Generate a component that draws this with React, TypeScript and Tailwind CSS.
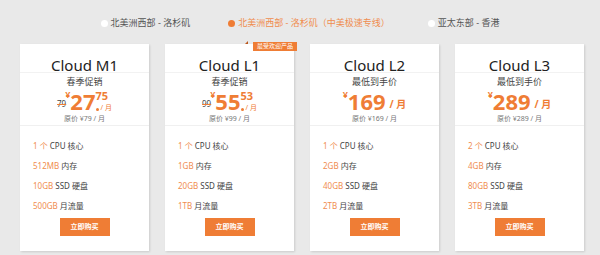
import { Fragment } from 'react';

type Plan = {
  name: string;
  tag: string;
  old?: string;
  int: string;
  dec?: string;
  orig: string;
  specs: [string, string][];
  hot?: boolean;
};

const plans: Plan[] = [
  {
    name: 'Cloud M1',
    tag: '春季促销',
    old: '79',
    int: '27',
    dec: '75',
    orig: '原价 ¥79 / 月',
    specs: [['1 个', 'CPU 核心'], ['512MB', '内存'], ['10GB', 'SSD 硬盘'], ['500GB', '月流量']],
  },
  {
    name: 'Cloud L1',
    tag: '春季促销',
    old: '99',
    int: '55',
    dec: '53',
    orig: '原价 ¥99 / 月',
    specs: [['1 个', 'CPU 核心'], ['1GB', '内存'], ['20GB', 'SSD 硬盘'], ['1TB', '月流量']],
    hot: true,
  },
  {
    name: 'Cloud L2',
    tag: '最低到手价',
    int: '169',
    orig: '原价 ¥169 / 月',
    specs: [['1 个', 'CPU 核心'], ['2GB', '内存'], ['40GB', 'SSD 硬盘'], ['2TB', '月流量']],
  },
  {
    name: 'Cloud L3',
    tag: '最低到手价',
    int: '289',
    orig: '原价 ¥289 / 月',
    specs: [['2 个', 'CPU 核心'], ['4GB', '内存'], ['80GB', 'SSD 硬盘'], ['3TB', '月流量']],
  },
];

const regions = [
  { label: '北美洲西部 - 洛杉矶', active: false },
  { label: '北美洲西部 - 洛杉矶（中美极速专线）', active: true },
  { label: '亚太东部 - 香港', active: false },
];

function Price({ p }: { p: Plan }) {
  if (!p.dec) {
    return (
      <div className="flex items-end justify-center h-[24px]">
        <span className="self-start text-[9px] font-bold text-[#ef7d35] leading-[10px] mt-[2px]">¥</span>
        <span className="text-[22px] font-bold text-[#ef7d35] leading-[22px]">{p.int}</span>
        <span className="text-[10px] font-bold text-[#ef7d35] leading-[12px] ml-[4px] mb-[2px]">/ 月</span>
      </div>
    );
  }
  return (
    <div className="flex items-end justify-center h-[24px]">
      <span className="text-[8px] text-[#444] line-through decoration-[#ef7d35] leading-[10px] mb-[3px] mr-[-1px]">{p.old}</span>
      <span className="self-start text-[9px] font-bold text-[#ef7d35] leading-[10px] mt-[2px]">¥</span>
      <span className="text-[22px] font-bold text-[#ef7d35] leading-[22px]">{p.int}</span>
      <div className="flex flex-col h-[22px] justify-between">
        <span className="text-[11px] font-bold text-[#ef7d35] leading-[11px]">{p.dec}</span>
        <div className="flex items-end leading-[8px]">
          <span className="w-[3px] h-[3px] rounded-full bg-[#ef7d35] mb-[1px]" />
          <span className="text-[7px] text-[#ef7d35] ml-[2px]">/ 月</span>
        </div>
      </div>
    </div>
  );
}

export default function App() {
  return (
    <div className="w-[600px] h-[255px] bg-[#e9e9e9] font-['Noto_Sans','Noto_Sans_CJK_SC',sans-serif] overflow-hidden">
      {/* region tabs */}
      <div className="h-[44px] flex items-center justify-center gap-[38px] pt-[2px]">
        {regions.map((r) => (
          <div key={r.label} className="flex items-center gap-[3px]">
            <span className={`w-[7px] h-[7px] rounded-full ${r.active ? 'bg-[#ef7d35]' : 'bg-white'}`} />
            <span className={`text-[9px] leading-[12px] ${r.active ? 'text-[#f08d4f]' : 'text-[#555]'}`}>{r.label}</span>
          </div>
        ))}
      </div>

      {/* plan cards */}
      <div className="flex gap-[16px] pl-[20px]">
        {plans.map((p) => (
          <div key={p.name} className="relative w-[129px] h-[207px] bg-white shadow-[1px_1px_2px_rgba(0,0,0,0.12)] flex flex-col">
            {p.hot && (
              <Fragment>
                <span className="absolute top-[-3px] right-[-1px] w-0 h-0 border-l-[3px] border-l-transparent border-b-[3px] border-b-[#b9561c] mr-[47px]" />
                <span className="absolute top-[-2px] right-[-3px] h-[9px] px-[4px] bg-[#ef7d35] text-white text-[6px] leading-[9px]">最受欢迎产品</span>
              </Fragment>
            )}
            <div className="h-[29px] pt-[12px] border-b border-[#f2f2f2] text-center text-[15px] leading-[18px] text-[#222]">
              {p.name}
            </div>
            <div className="h-[53px] pt-[3px] border-b border-[#f0f0f0] flex flex-col items-center">
              <div className="text-[9px] leading-[11px] text-[#444]">{p.tag}</div>
              <div className="mt-[1px]">
                <Price p={p} />
              </div>
              <div className="text-[7px] leading-[9px] text-[#777] mt-[2px]">{p.orig}</div>
            </div>
            <div className="pt-[10px] pl-[13px]">
              {p.specs.map(([a, b]) => (
                <div key={b} className="h-[20px] leading-[20px] text-[8px] text-[#444]">
                  <span className="text-[#f08d4f]">{a}</span> {b}
                </div>
              ))}
            </div>
            <div className="flex justify-center mt-[2px]">
              <button className="w-[50px] h-[18px] bg-[#ef7d35] text-white text-[7px] font-bold leading-[18px]">立即购买</button>
            </div>
          </div>
        ))}
      </div>
    </div>
  );
}
